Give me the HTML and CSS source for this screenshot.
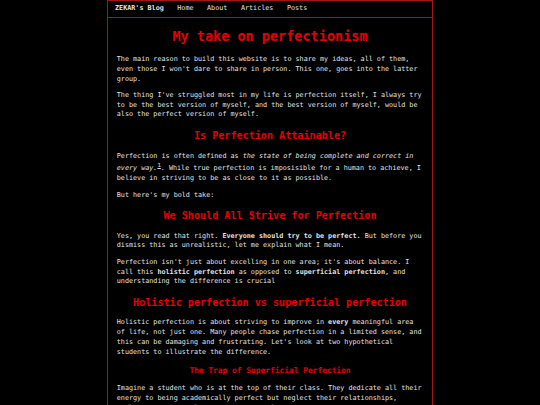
FILE: index.html
```html
<!DOCTYPE html>
<html lang="en">
<head>
<meta charset="utf-8">
<title>My take on perfectionism - ZEKAR's Blog</title>
<link rel="stylesheet" href="styles.css">
</head>
<body>
<div class="page">
  <nav class="nav">
    <a class="brand" href="#">ZEKAR's Blog</a>
    <a class="nav-link" href="#">Home</a>
    <a class="nav-link" href="#">About</a>
    <a class="nav-link" href="#">Articles</a>
    <a class="nav-link" href="#">Posts</a>
  </nav>
  <main class="content">
    <h1>My take on perfectionism</h1>
    <p>The main reason to build this website is to share my ideas, all of them, even those I won't dare to share in person. This one, goes into the latter group.</p>
    <p>The thing I've struggled most in my life is perfection itself, I always try to be the best version of myself, and the best version of myself, would be also the perfect version of myself.</p>
    <h2>Is Perfection Attainable?</h2>
    <p>Perfection is often defined as <em>the state of being complete and correct in every way.</em><sup><a class="fn" href="#">1</a></sup>. While true perfection is imposisible for a human to achieve, I believe in striving to be as close to it as possible.</p>
    <p>But here's my bold take:</p>
    <h2>We Should All Strive for Perfection</h2>
    <p>Yes, you read that right. <strong>Everyone should try to be perfect.</strong> But before you dismiss this as unrealistic, let me explain what I mean.</p>
    <p>Perfection isn't just about excelling in one area; it's about balance. I call this <strong>holistic perfection</strong> as opposed to <strong>superficial perfection</strong>, and understanding the difference is crucial</p>
    <h2>Holistic perfection vs superficial perfection</h2>
    <p>Holistic perfection is about striving to improve in <strong>every</strong> meaningful area of life, not just one. Many people chase perfection in a limited sense, and this can be damaging and frustrating. Let's look at two hypothetical students to illustrate the difference.</p>
    <h3>The Trap of Superficial Perfection</h3>
    <p>Imagine a student who is at the top of their class. They dedicate all their energy to being academically perfect but neglect their relationships, health, and personal growth. They may look perfect on paper, but they are far from it.</p>
  </main>
</div>
</body>
</html>
```
FILE: styles.css
```css
html, body {
  margin: 0;
  padding: 0;
  background: #000;
}
body {
  color: #e2e2e2;
  font-family: "DejaVu Sans Mono", "Liberation Mono", monospace;
  font-size: 6.75px;
  line-height: 1.44;
}
.page {
  width: 323.5px;
  margin: 0 auto;
  border: 1px solid #a3141b;
  border-bottom: none;
  min-height: 405px;
}
.nav {
  display: flex;
  align-items: center;
  gap: 13.5px;
  padding: 3px 6.75px 2.8px;
  border-bottom: 1px solid #a3141b;
}
.nav a {
  color: #e2e2e2;
  text-decoration: none;
}
.brand {
  font-weight: bold;
}
.content {
  padding: 0.1px 8.5px;
}
h1, h2, h3 {
  color: #e60000;
  text-align: center;
  font-weight: bold;
}
h1 {
  font-size: 2em;
  margin: 0.67em 0;
}
h2 {
  font-size: 1.5em;
  margin: 0.83em 0;
}
h3 {
  font-size: 1.17em;
  margin: 1em 0;
}
p {
  margin: 1em 0;
}
.fn {
  color: #e2e2e2;
}
```
